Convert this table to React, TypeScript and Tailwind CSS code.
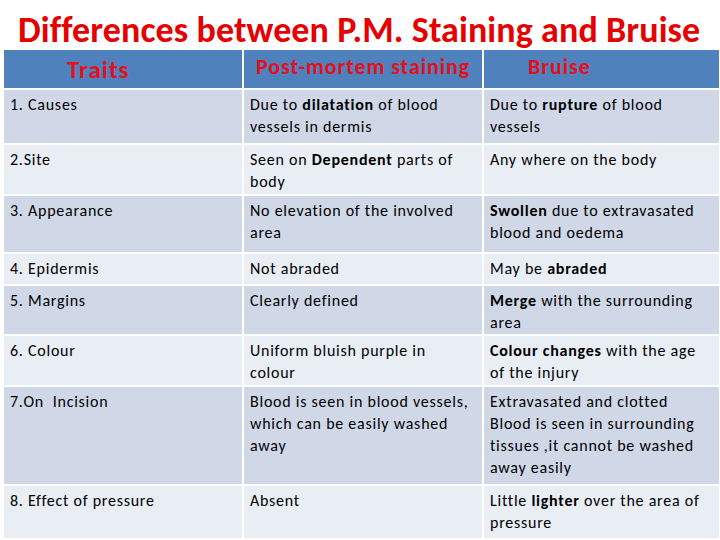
import React from "react";

type Seg = string | { b: string };
type Row = { h: string; bg: string; c: Seg[][] };

const rows: Row[] = [
  { h: "h-[53px]", bg: "bg-[#d0d8e8]", c: [["1. Causes"], ["Due to ", { b: "dilatation" }, " of blood\nvessels in dermis"], ["Due to ", { b: "rupture" }, " of blood\nvessels"]] },
  { h: "h-[49px]", bg: "bg-[#e9edf4]", c: [["2.Site"], ["Seen on ", { b: "Dependent" }, " parts of\nbody"], ["Any where on the body"]] },
  { h: "h-[56px]", bg: "bg-[#d0d8e8]", c: [["3. Appearance"], ["No elevation of the involved\narea"], [{ b: "Swollen" }, " due to extravasated\nblood and oedema"]] },
  { h: "h-[30px]", bg: "bg-[#e9edf4]", c: [["4. Epidermis"], ["Not abraded"], ["May be ", { b: "abraded" }]] },
  { h: "h-[48px]", bg: "bg-[#d0d8e8]", c: [["5. Margins"], ["Clearly defined"], [{ b: "Merge" }, " with the surrounding\narea"]] },
  { h: "h-[49px]", bg: "bg-[#e9edf4]", c: [["6. Colour"], ["Uniform bluish purple in\ncolour"], [{ b: "Colour changes" }, " with the age\nof the injury"]] },
  { h: "h-[97px]", bg: "bg-[#d0d8e8]", c: [["7.On  Incision"], ["Blood is seen in blood vessels,\nwhich can be easily washed\naway"], ["Extravasated and clotted\nBlood is seen in surrounding\ntissues ,it cannot be washed\naway easily"]] },
  { h: "h-[52px]", bg: "bg-[#e9edf4]", c: [["8. Effect of pressure"], ["Absent"], ["Little ", { b: "lighter" }, " over the area of\npressure"]] },
];

function Cell({ segs, bg, h }: { segs: Seg[]; bg: string; h: string }) {
  return (
    <div className={`${bg} ${h} pl-[6px] pt-[4px] text-[16px] leading-[22px] tracking-[0.75px] text-black whitespace-pre overflow-hidden`}>
      {segs.map((s, i) =>
        typeof s === "string" ? <span key={i}>{s}</span> : <b key={i} className="font-bold">{s.b}</b>
      )}
    </div>
  );
}

export default function App() {
  return (
    <div className="w-[720px] h-[540px] bg-white overflow-hidden" style={{ fontFamily: "Carlito, Lato, 'Noto Sans', sans-serif" }}>
      <div className="h-[50px] flex items-center pl-[18px] pt-[10px]">
        <h1 className="text-[36px] font-bold text-[#e60000] leading-none whitespace-nowrap tracking-[0.1px]">
          Differences between P.M. Staining and Bruise
        </h1>
      </div>
      <div className="ml-[4px] grid grid-cols-[238px_238px_235px] gap-[2px]">
        <div className="bg-[#4f81bd] h-[38px] pl-[63px] pt-[5px] text-[25px] font-bold text-[#e3101c] leading-[30px] tracking-[1px]">Traits</div>
        <div className="bg-[#4f81bd] h-[38px] pl-[12px] pt-[3px] text-[22px] font-bold text-[#e3101c] leading-[28px] tracking-[0.9px]">Post-mortem staining</div>
        <div className="bg-[#4f81bd] h-[38px] pl-[44px] pt-[3px] text-[22px] font-bold text-[#e3101c] leading-[28px] tracking-[0.9px]">Bruise</div>
        {rows.map((r, i) => (
          <React.Fragment key={i}>
            {r.c.map((segs, j) => (
              <Cell key={j} segs={segs} bg={r.bg} h={r.h} />
            ))}
          </React.Fragment>
        ))}
      </div>
    </div>
  );
}
